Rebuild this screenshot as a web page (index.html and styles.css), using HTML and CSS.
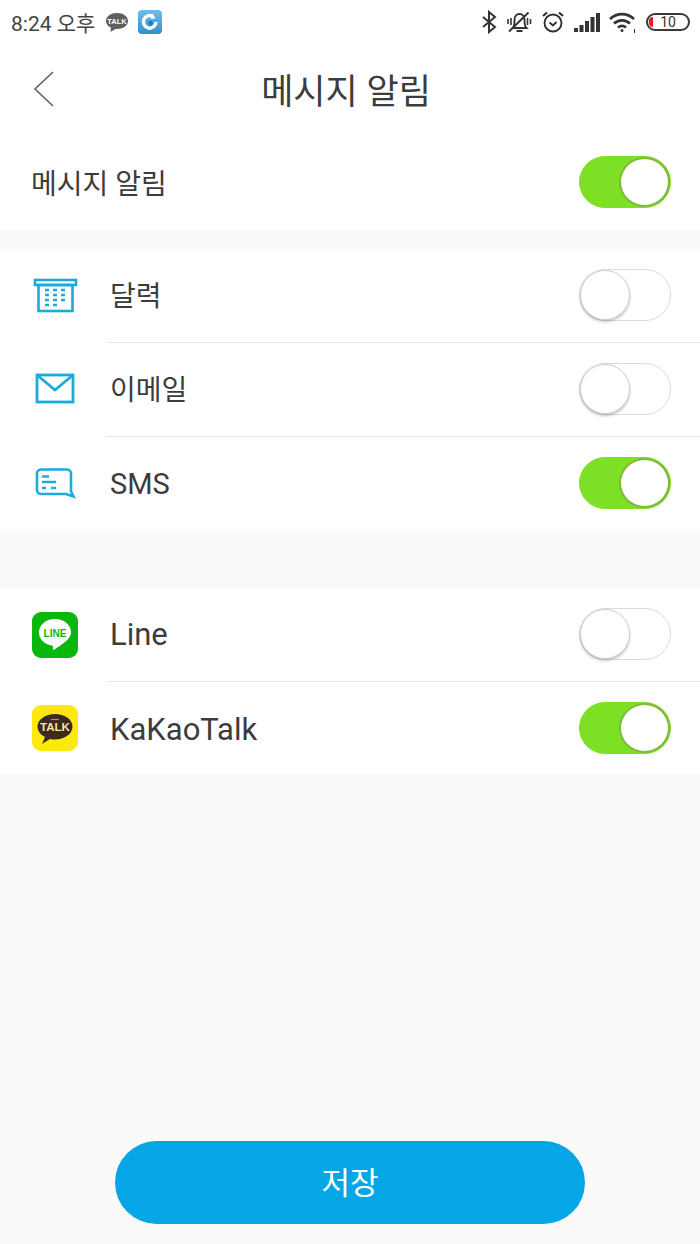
FILE: index.html
```html
<!DOCTYPE html>
<html lang="ko">
<head>
    <meta charset="UTF-8">
    <meta name="viewport" content="width=device-width, initial-scale=1.0">
    <title>메시지 알림</title>
    <link rel="stylesheet" href="styles.css">
</head>
<body>
    <div class="app">
        <div class="top-area">
            <div class="status-bar">
                <div class="status-left">
                    <span class="clock">8:24 오후</span>
                    <svg class="talk-note" width="24" height="24" viewBox="0 0 24 24">
                        <path d="M12 3C5.800 3 1 6.500 1 11c0 3 2 5.300 5 6.700L5.500 22l5-3.100c.5 0 1 .1 1.500.1 6.200 0 11-3.500 11-8s-4.800-8-11-8z" fill="#5f5f5f"/>
                        <text x="12" y="13.500" class="talk-note-text" text-anchor="middle">TALK</text>
                    </svg>
                    <svg class="app-note" width="24" height="24" viewBox="0 0 24 24">
                        <defs>
                            <linearGradient id="appBlue" x1="0" y1="0" x2="0" y2="1">
                                <stop offset="0" stop-color="#6cc0ea"/>
                                <stop offset="1" stop-color="#2f8fd0"/>
                            </linearGradient>
                        </defs>
                        <rect width="24" height="24" rx="4" fill="url(#appBlue)"/>
                        <path d="M15 6.500a6.300 6.300 0 1 0 3 5.500" fill="none" stroke="#fff" stroke-width="3.400"/>
                        <path d="M14.500 3.500l3 5-5 .5z" fill="#fff"/>
                        <circle cx="12.500" cy="13" r="2.200" fill="#1b76c4"/>
                    </svg>
                </div>
                <div class="status-right">
                    <svg width="16" height="24" viewBox="0 0 16 24" fill="none" stroke="#333" stroke-width="2">
                        <path d="M2 7l12 10-6 5V2l6 5L2 17"/>
                    </svg>
                    <svg width="26" height="24" viewBox="0 0 26 24" fill="none" stroke="#333" stroke-width="1.900">
                        <path d="M7 18c1.500-2 1.500-4.500 1.500-8 0-3.500 2-6 5-6s5 2.500 5 6c0 3.500 0 6 2 8z"/>
                        <path d="M10.500 21h6M3 21.500L22.500 2.500"/>
                        <path d="M2 9v5M5 8v7M21.500 8v7M24.500 9v5" stroke-width="1.600"/>
                    </svg>
                    <svg width="24" height="24" viewBox="0 0 24 24" fill="none" stroke="#333" stroke-width="1.900">
                        <circle cx="12" cy="13" r="8.500"/>
                        <path d="M8.500 12.500l3.500 3 3.500-3.500"/>
                        <path d="M2 6l4-3.500M22 6l-4-3.500" stroke-width="2.200"/>
                    </svg>
                    <svg width="26" height="24" viewBox="0 0 26 24" fill="#333">
                        <rect x="0" y="18" width="4" height="4"/>
                        <rect x="5.500" y="15" width="4" height="7"/>
                        <rect x="11" y="11" width="4" height="11"/>
                        <rect x="16.500" y="7" width="4" height="15"/>
                        <rect x="22" y="3" width="4" height="19"/>
                    </svg>
                    <svg width="28" height="24" viewBox="0 0 28 24" fill="none" stroke="#333" stroke-width="2.800">
                        <path d="M1 9c7-6.500 17-6.500 24 0"/>
                        <path d="M5 13.500c4.500-4.200 11.500-4.200 16 0"/>
                        <path d="M9 17.500c2.500-2 5.500-2 8 0"/>
                        <circle cx="13" cy="20.500" r="1.500" fill="#333" stroke="none"/>
                        <path d="M25.500 19v4" stroke-width="1"/>
                    </svg>
                    <div class="battery">
                        <span class="battery-level"></span>
                        <span class="battery-num">10</span>
                    </div>
                </div>
            </div>
            <div class="nav-bar">
                <svg class="back" width="24" height="38" viewBox="0 0 24 38" fill="none" stroke="#666" stroke-width="1.700">
                    <path d="M21 2L3 19l18 17"/>
                </svg>
                <h1 class="nav-title">메시지 알림</h1>
            </div>
        </div>

        <div class="row master-row">
            <span class="row-label ko">메시지 알림</span>
            <span class="switch on"></span>
        </div>

        <div class="group first-group">
            <div class="row">
                <svg class="row-icon" width="46" height="36" viewBox="0 0 46 36" fill="none" stroke="#1cabd9" stroke-width="2.600">
                    <rect x="3" y="2" width="41" height="5"/>
                    <rect x="6.500" y="7" width="34" height="26"/>
                    <path d="M13 12h4M21 12h4M29 12h4M13 17h4M21 17h4M29 17h4M13 22h4M21 22h4M29 22h4M13 27h4M21 27h4" stroke-width="2.400"/>
                </svg>
                <div class="row-body">
                    <span class="row-label ko">달력</span>
                    <span class="switch"></span>
                </div>
            </div>
            <div class="row">
                <svg class="row-icon" width="46" height="36" viewBox="0 0 46 36" fill="none" stroke="#1cabd9" stroke-width="2.800">
                    <rect x="5" y="3" width="36" height="27"/>
                    <path d="M5 3l18 15L41 3"/>
                </svg>
                <div class="row-body">
                    <span class="row-label ko">이메일</span>
                    <span class="switch"></span>
                </div>
            </div>
            <div class="row">
                <svg class="row-icon" width="46" height="36" viewBox="0 0 46 36" fill="none" stroke="#1cabd9" stroke-width="2.600">
                    <path d="M9 3.500h26a4 4 0 0 1 4 4v18l2.500 5-7.500-2.500H9a4 4 0 0 1-4-4V7.500a4 4 0 0 1 4-4z"/>
                    <path d="M10 10.500h7M10 16h14M10 22h4M19 22h5" stroke-width="2.400"/>
                </svg>
                <div class="row-body">
                    <span class="row-label caps">SMS</span>
                    <span class="switch on"></span>
                </div>
            </div>
        </div>

        <div class="group second-group">
            <div class="row">
                <svg class="row-icon" width="46" height="46" viewBox="0 0 46 46">
                    <rect width="46" height="46" rx="9" fill="#0ab70c"/>
                    <path d="M23 7C13.800 7 7 13 7 20.500c0 6.700 5.600 12 13 13 1.500.3 1 2.100.8 3.400-.1.800.6 1.100 1.400.7 1-.5 8-5 12-8.500C37 26.500 39 23.700 39 20.500 39 13 32.200 7 23 7z" fill="#fff"/>
                    <text x="23" y="24.500" class="line-text" text-anchor="middle">LINE</text>
                </svg>
                <div class="row-body">
                    <span class="row-label latin">Line</span>
                    <span class="switch"></span>
                </div>
            </div>
            <div class="row kakao-row">
                <svg class="row-icon" width="46" height="46" viewBox="0 0 46 46">
                    <rect width="46" height="46" rx="9" fill="#fde910"/>
                    <path d="M23 9C13.500 9 5.500 14.500 5.500 21.500c0 4.500 3 8.300 7.500 10.500l-3 7 8-5c1.700.4 3.400.5 5 .5 9.500 0 17.500-5.500 17.500-13S32.500 9 23 9z" fill="#3c2a21"/>
                    <path d="M19 14.500h8" stroke="#a9985a" stroke-width="1.200"/>
                    <text x="23" y="26" class="kakao-text" text-anchor="middle">TALK</text>
                </svg>
                <div class="row-body">
                    <span class="row-label latin">KaKaoTalk</span>
                    <span class="switch on"></span>
                </div>
            </div>
        </div>

        <div class="footer">
            <button class="save-btn">저장</button>
        </div>
    </div>
</body>
</html>
```

FILE: styles.css
```css
*, *::after {
    box-sizing: border-box;
}
body {
    margin: 0;
    background: #fafafa;
    font-family: Roboto, "Noto Sans CJK KR", sans-serif;
    color: #3a3a3a;
}
.app {
    display: flex;
    flex-direction: column;
    height: 1244px;
    overflow: hidden;
}
.top-area {
    background: #fff;
}
.status-bar {
    display: flex;
    justify-content: space-between;
    align-items: center;
    height: 44px;
    padding: 0 10px 0 11px;
}
.status-left {
    display: flex;
    align-items: center;
}
.status-right {
    display: flex;
    align-items: center;
    gap: 9px;
}
.clock {
    font-size: 21px;
    color: #444;
    margin-right: 10px;
}
.app-note {
    margin-left: 9px;
}
.talk-note-text {
    font-family: "Liberation Sans", sans-serif;
    font-size: 7.5px;
    font-weight: 700;
    fill: #fff;
}
.battery {
    position: relative;
    display: flex;
    align-items: center;
    justify-content: center;
    width: 44px;
    height: 18px;
    border: 2px solid #3a3a3a;
    border-radius: 9px;
    overflow: hidden;
}
.battery-level {
    position: absolute;
    left: 1px;
    top: 2px;
    bottom: 2px;
    width: 4px;
    border-radius: 4px 0 0 4px;
    background: #e0202a;
}
.battery-num {
    font-size: 14px;
    line-height: 14px;
    color: #333;
}
.nav-bar {
    position: relative;
    display: flex;
    align-items: center;
    justify-content: center;
    height: 92px;
    padding: 0 8px 4px 0;
}
.back {
    position: absolute;
    left: 32px;
    top: 26px;
}
.nav-title {
    margin: 0;
    font-size: 35px;
    font-weight: 400;
    color: #3c3c3c;
}
.row {
    display: flex;
    align-items: center;
    height: 94px;
    padding-left: 32px;
    background: #fff;
}
.master-row {
    justify-content: space-between;
    padding: 0 29px 0 31px;
}
.row-label {
    font-size: 28px;
    color: #3c3c3c;
}
.ko {
    margin-bottom: 3px;
}
.latin {
    font-size: 31px;
}
.caps {
    font-size: 29px;
}
.row-icon {
    flex: none;
    margin-right: 28px;
}
.row-body {
    flex: 1;
    display: flex;
    justify-content: space-between;
    align-items: center;
    align-self: stretch;
    padding: 0 29px 0 4px;
    border-bottom: 1px solid #e8e8e8;
}
.row-body .row-label {
    margin-left: 0;
}
.group .row:last-child .row-body {
    border-bottom: none;
}
.first-group {
    margin-top: 19px;
}
.second-group {
    margin-top: 57px;
}
.second-group .row:last-child {
    height: 92px;
}
.kakao-row .row-body {
    padding-top: 2px;
}
.switch {
    position: relative;
    display: block;
    width: 92px;
    height: 52px;
    margin-top: -2px;
    border-radius: 26px;
    background: #fff;
    border: 1px solid #dcdcdc;
}
.switch::after {
    content: "";
    position: absolute;
    left: 0;
    top: 0;
    width: 50px;
    height: 50px;
    border-radius: 50%;
    background: #fff;
    border: 1px solid #cfcfcf;
    box-shadow: 0 2px 3px rgba(0,0,0,0.22);
}
.switch.on {
    background: #7ee024;
    border-color: #7ee024;
}
.switch.on::after {
    left: 39px;
    width: 51px;
    border: 2px solid #7fb83c;
    box-shadow: none;
}
.line-text {
    font-family: "Liberation Sans", sans-serif;
    font-size: 10px;
    font-weight: 700;
    fill: #0ab70c;
}
.kakao-text {
    font-family: "Liberation Sans", sans-serif;
    font-size: 11.5px;
    font-weight: 700;
    fill: #f6e6a0;
}
.footer {
    flex: 1;
    display: flex;
    justify-content: center;
    align-items: flex-end;
    padding-bottom: 20px;
}
.save-btn {
    width: 470px;
    height: 83px;
    padding-bottom: 5px;
    border: none;
    border-radius: 42px;
    background: #05a6e6;
    color: #fff;
    font-family: inherit;
    font-size: 31px;
}
```
